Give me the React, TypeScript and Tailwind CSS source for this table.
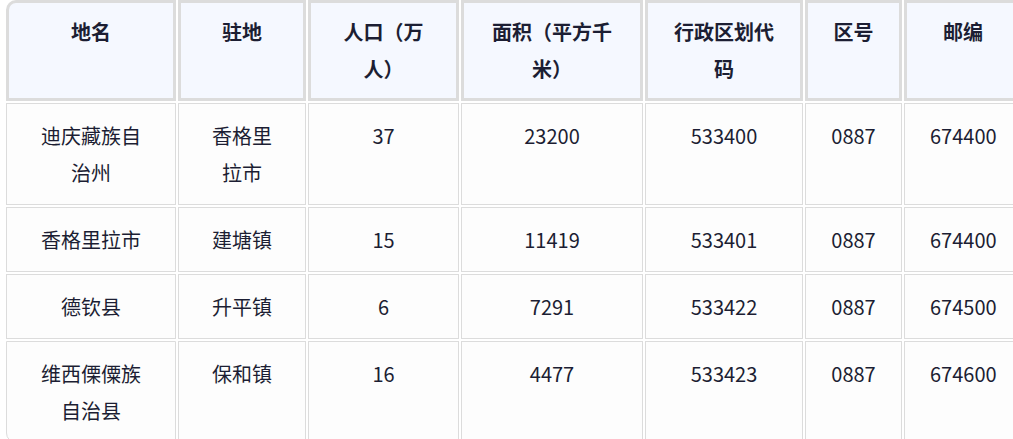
import React from 'react';

const headers = ['地名', '驻地', '人口（万人）', '面积（平方千米）', '行政区划代码', '区号', '邮编'];

const widths = ['w-[170px]', 'w-[128px]', 'w-[151px]', 'w-[182px]', 'w-[158px]', 'w-[97px]', 'w-[118px]'];

const rows = [
  ['迪庆藏族自治州', '香格里拉市', '37', '23200', '533400', '0887', '674400'],
  ['香格里拉市', '建塘镇', '15', '11419', '533401', '0887', '674400'],
  ['德钦县', '升平镇', '6', '7291', '533422', '0887', '674500'],
  ['维西傈僳族自治县', '保和镇', '16', '4477', '533423', '0887', '674600'],
];

export default function App() {
  return (
    <div
      className="w-[1013px] h-[439px] overflow-hidden bg-white pl-1 text-[20px] leading-[37px] text-[#1c1e33]"
      style={{ fontFamily: '"Noto Sans CJK SC", "Noto Sans", sans-serif' }}
    >
      <table className="table-fixed border-separate border-spacing-[2px] -mt-[2px] w-[1020px] max-w-none">
        <thead>
          <tr>
            {headers.map((h, i) => (
              <th
                key={h}
                className={`${widths[i]} ${i === 0 ? 'rounded-tl-[10px]' : ''} ${i === 6 ? 'rounded-tr-[10px]' : ''} border-[3px] border-[#dcdcdc] bg-[#f5f8ff] px-[25px] pt-[10px] pb-[11px] align-top text-center font-semibold`}
              >
                {h}
              </th>
            ))}
          </tr>
        </thead>
        <tbody>
          {rows.map((r, ri) => (
            <tr key={ri}>
              {r.map((c, ci) => (
                <td
                  key={ci}
                  className={`${ri === rows.length - 1 && ci === 0 ? 'rounded-bl-[10px]' : ''} border border-[#dcdcdc] bg-[#fdfdfd] px-[25px] py-[13px] align-top text-center font-normal`}
                >
                  {c}
                </td>
              ))}
            </tr>
          ))}
        </tbody>
      </table>
    </div>
  );
}
